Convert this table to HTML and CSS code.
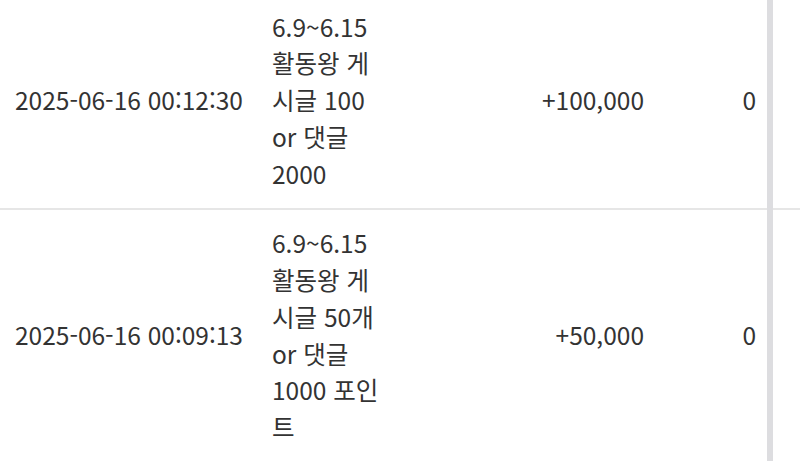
FILE: index.html
```
<!DOCTYPE html>
<html lang="ko">
<head>
    <meta charset="UTF-8">
    <meta name="viewport" content="width=device-width, initial-scale=1.0">
    <title>포인트 내역</title>
    <link rel="stylesheet" href="styles.css">
</head>
<body>

<div class="history">
    <div class="history-list">
        <div class="row">
            <div class="cell date">2025-06-16 00:12:30</div>
            <div class="cell desc">6.9~6.15 활동왕 게시글 100 or 댓글 2000</div>
            <div class="cell amount">+100,000</div>
            <div class="cell balance">0</div>
        </div>
        <div class="row">
            <div class="cell date">2025-06-16 00:09:13</div>
            <div class="cell desc">6.9~6.15 활동왕 게시글 50개 or 댓글 1000 포인트</div>
            <div class="cell amount">+50,000</div>
            <div class="cell balance">0</div>
        </div>
    </div>
    <div class="scroll-thumb"></div>
</div>

</body>
</html>
```

FILE: styles.css
```
body {
    font-family: "Noto Sans CJK KR", "Noto Sans", sans-serif;
    margin: 0;
    padding: 0;
    background-color: #fff;
    color: #333;
    overflow: hidden;
}

.history {
    position: relative;
    height: 461px;
    overflow: hidden;
}

.history-list {
    margin-top: -7px;
}

.row {
    display: grid;
    grid-template-columns: 257px 142px 260px 112px 1fr;
    align-items: center;
    border-bottom: 2px solid #e6e6e6;
}

.cell {
    padding: 15.5px 15px;
    font-size: 24.5px;
    line-height: 36.75px;
    white-space: nowrap;
}

.desc {
    white-space: normal;
}

.amount,
.balance {
    text-align: right;
}

.scroll-thumb {
    position: absolute;
    top: 0;
    bottom: 0;
    left: 767px;
    width: 6px;
    background-color: #dddde0;
}
```
